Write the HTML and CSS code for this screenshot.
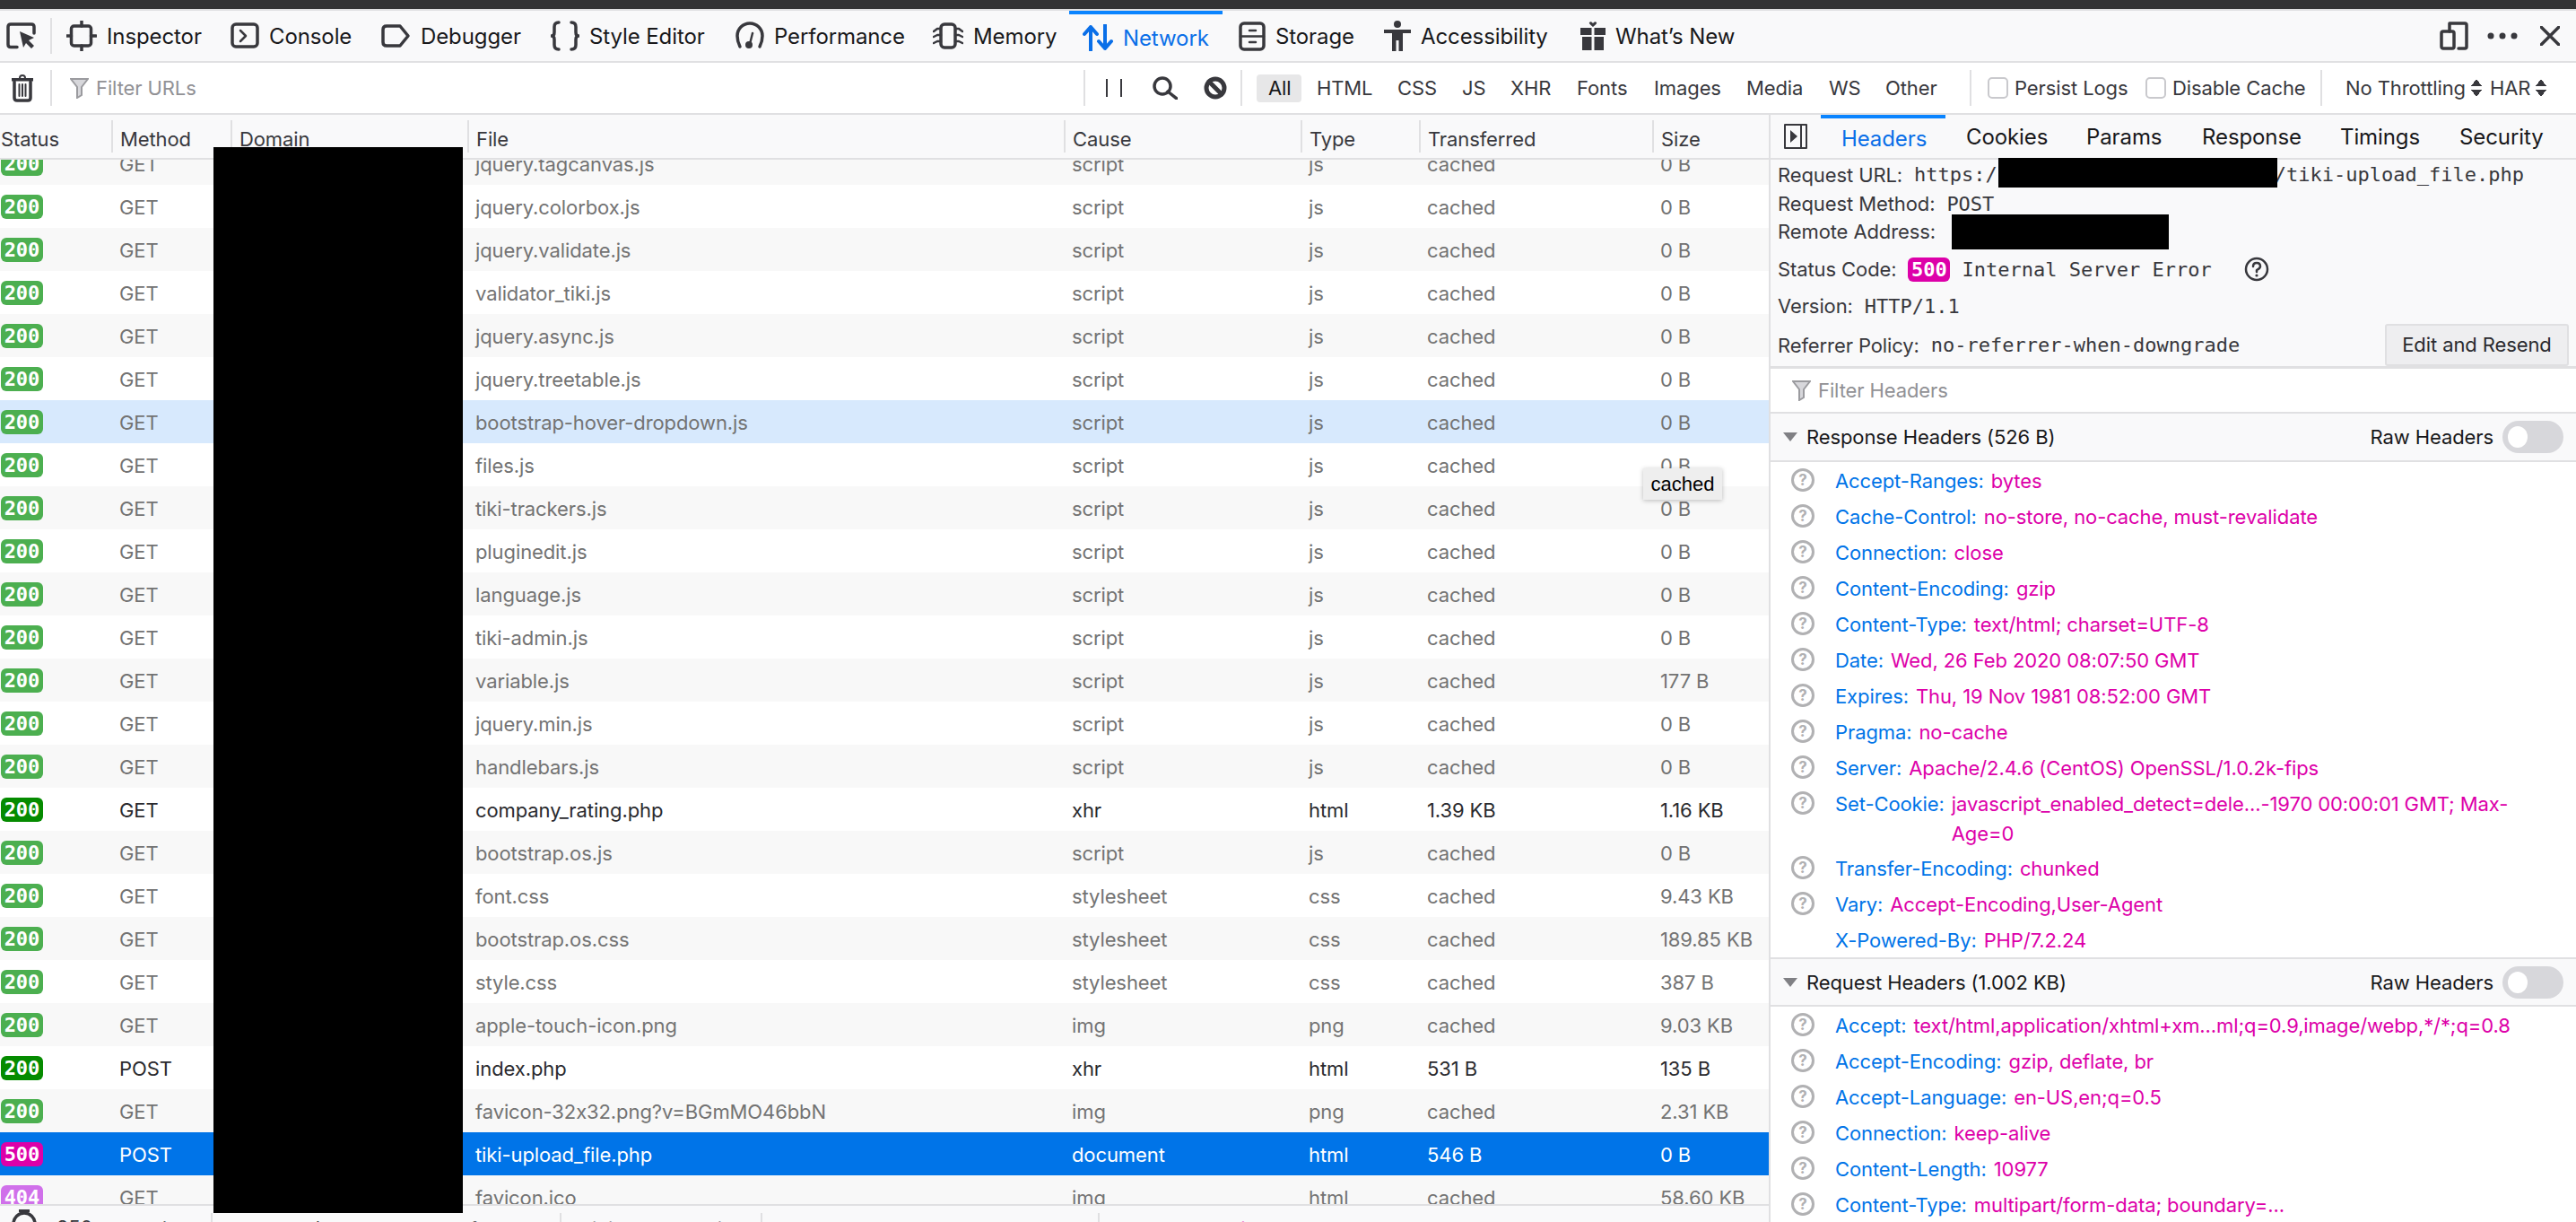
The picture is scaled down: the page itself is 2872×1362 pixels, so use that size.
FILE: index.html
```html
<!DOCTYPE html>
<html lang="en">

<head>
    <meta charset="UTF-8">
    <title>Network - Developer Tools</title>
    <link rel="stylesheet" href="styles.css">
</head>

<body>
    <div class="topline"></div>

    <!-- Tools bar -->
    <nav class="tools">
        <div class="picker">
            <svg width="34" height="30" viewBox="0 0 34 30"><path class="st" d="M12 27.5H5Q2 27.5 2 24.5V5Q2 2 5 2H28Q31 2 31 5V12"/><path class="fl" d="M15 10L31 17L25 20L31 26L28 29L22 23L19 28Z"/></svg>
        </div>
        <div class="tab">
            <svg width="34" height="34" viewBox="0 0 34 34"><rect class="st" x="5.5" y="6" width="22" height="22" rx="3"/><path class="st" d="M17 0V6M17 28V34M0 17H5.500M27.500 17H33"/></svg>
            Inspector
        </div>
        <div class="tab">
            <svg width="32" height="30" viewBox="0 0 32 30"><rect class="st" x="2" y="2" width="28" height="25" rx="4"/><path class="st thin" d="M11 9L17 15L11 21"/></svg>
            Console
        </div>
        <div class="tab">
            <svg width="33" height="28" viewBox="0 0 33 28"><path class="st" d="M6 3H21L30 14L21 25H6Q2 25 2 21V7Q2 3 6 3Z"/></svg>
            Debugger
        </div>
        <div class="tab">
            <svg width="32" height="34" viewBox="0 0 32 34"><path class="st" d="M9 2Q4 2 4 7V13Q4 17 1 17Q4 17 4 21V27Q4 32 9 32M23 2Q28 2 28 7V13Q28 17 31 17Q28 17 28 21V27Q28 32 23 32"/></svg>
            Style Editor
        </div>
        <div class="tab">
            <svg width="32" height="34" viewBox="0 0 32 34"><path class="st" d="M5 29Q2 23 2 17A14 14 0 0 1 30 17Q30 23 27 29"/><circle class="fl" cx="15" cy="27" r="4"/><path class="st thin" d="M16 26L19 14"/></svg>
            Performance
        </div>
        <div class="tab">
            <svg width="34" height="30" viewBox="0 0 34 30"><rect class="st" x="9" y="2" width="16" height="26" rx="4"/><path class="st thin" d="M1 10L5 7H9M1 16L5 14H9M1 23L5 21H9M33 10L29 7H25M33 16L29 14H25M33 23L29 21H25"/></svg>
            Memory
        </div>
        <div class="tab active">
            <svg width="34" height="30" viewBox="0 0 34 30"><path class="st blue" d="M9 29V3M2 11L9 3L16 11M25 1V27M18 19L25 27L32 19"/></svg>
            Network
        </div>
        <div class="tab">
            <svg width="30" height="33" viewBox="0 0 30 33"><rect class="st" x="2" y="2" width="26" height="29" rx="4"/><path class="st thin" d="M2 16.500H28M12 10H19M12 23H19"/></svg>
            Storage
        </div>
        <div class="tab">
            <svg width="30" height="34" viewBox="0 0 30 34"><circle class="fl" cx="15" cy="4" r="4"/><path class="fl" d="M0 10H30V14H21V34H16.500V22H13.500V34H9V14H0Z"/></svg>
            Accessibility
        </div>
        <div class="tab">
            <svg width="28" height="32" viewBox="0 0 28 32"><path class="fl" d="M14 6Q9 2 10 1Q12 -1 14 2Q16 -1 18 1Q19 2 14 6ZM0 7H12.500V15H0ZM15.500 7H28V15H15.500ZM2 17H12.500V32H2ZM15.500 17H26V32H15.500Z"/></svg>
            What&rsquo;s New
        </div>
        <div class="tools-end">
            <svg width="32" height="32" viewBox="0 0 32 32"><path class="st" d="M11 2H28Q30 2 30 4V28Q30 30 28 30H21M11 2V11"/><rect class="st" x="2" y="11" width="14" height="19" rx="2"/></svg>
            <svg class="dots" width="34" height="8" viewBox="0 0 34 8"><circle class="fl" cx="4" cy="4" r="3.500"/><circle class="fl" cx="17" cy="4" r="3.500"/><circle class="fl" cx="30" cy="4" r="3.500"/></svg>
            <svg class="close" width="22" height="22" viewBox="0 0 22 22"><path class="st" d="M1 1L21 21M21 1L1 21"/></svg>
        </div>
    </nav>

    <!-- Filter bar -->
    <div class="filterbar">
        <div class="trash">
            <svg width="24" height="31" viewBox="0 0 24 31"><path class="fl" d="M8 4Q8 0 12 0Q16 0 16 4H24V7.500H0V4ZM10 4H14Q14 2 12 2Q10 2 10 4Z"/><path class="st" d="M3 8V26Q3 29 6 29H18Q21 29 21 26V8"/><path class="st hair" d="M8.500 11V24M12 11V24M15.500 11V24"/></svg>
        </div>
        <div class="search">
            <svg width="21" height="23" viewBox="0 0 21 23"><path class="funnel" d="M1 1H20L13 10V19L8 22V10Z"/></svg>
            Filter URLs
        </div>
        <div class="actions">
            <svg width="18" height="20" viewBox="0 0 18 20"><path class="st hair" d="M1 0V20M17 0V20"/></svg>
            <svg class="find" width="28" height="26" viewBox="0 0 28 26"><circle class="st" cx="11" cy="11" r="9"/><path class="st" d="M17 17L27 25"/></svg>
            <svg width="26" height="26" viewBox="0 0 26 26"><circle class="st thick" cx="13" cy="13" r="10"/><path class="st thick" d="M6 6L20 20"/></svg>
        </div>
        <div class="types">
            <span class="type on">All</span>
            <span class="type">HTML</span>
            <span class="type">CSS</span>
            <span class="type">JS</span>
            <span class="type">XHR</span>
            <span class="type">Fonts</span>
            <span class="type">Images</span>
            <span class="type">Media</span>
            <span class="type">WS</span>
            <span class="type">Other</span>
        </div>
        <div class="options">
            <span class="check persist"></span>
            <span class="opt-persist">Persist Logs</span>
            <span class="check"></span>
            <span>Disable Cache</span>
        </div>
        <div class="selects">
            <span>No Throttling</span><span class="updown"></span>
            <span class="har">HAR</span><span class="updown"></span>
        </div>
    </div>

    <main class="content">
        <!-- Requests table -->
        <section class="requests">
            <div class="head grid">
                <span>Status</span><span>Method</span><span>Domain</span><span>File</span><span>Cause</span><span>Type</span><span>Transferred</span><span>Size</span>
            </div>
            <div class="list">
                <div class="rows">
                    <div class="row grid"><span><b class="badge">200</b></span><span>GET</span><span></span><span>jquery.tagcanvas.js</span><span>script</span><span>js</span><span>cached</span><span>0 B</span></div>
                    <div class="row grid"><span><b class="badge">200</b></span><span>GET</span><span></span><span>jquery.colorbox.js</span><span>script</span><span>js</span><span>cached</span><span>0 B</span></div>
                    <div class="row grid"><span><b class="badge">200</b></span><span>GET</span><span></span><span>jquery.validate.js</span><span>script</span><span>js</span><span>cached</span><span>0 B</span></div>
                    <div class="row grid"><span><b class="badge">200</b></span><span>GET</span><span></span><span>validator_tiki.js</span><span>script</span><span>js</span><span>cached</span><span>0 B</span></div>
                    <div class="row grid"><span><b class="badge">200</b></span><span>GET</span><span></span><span>jquery.async.js</span><span>script</span><span>js</span><span>cached</span><span>0 B</span></div>
                    <div class="row grid"><span><b class="badge">200</b></span><span>GET</span><span></span><span>jquery.treetable.js</span><span>script</span><span>js</span><span>cached</span><span>0 B</span></div>
                    <div class="row grid hover"><span><b class="badge">200</b></span><span>GET</span><span></span><span>bootstrap-hover-dropdown.js</span><span>script</span><span>js</span><span>cached</span><span>0 B</span></div>
                    <div class="row grid"><span><b class="badge">200</b></span><span>GET</span><span></span><span>files.js</span><span>script</span><span>js</span><span>cached</span><span>0 B</span></div>
                    <div class="row grid"><span><b class="badge">200</b></span><span>GET</span><span></span><span>tiki-trackers.js</span><span>script</span><span>js</span><span>cached</span><span>0 B</span></div>
                    <div class="row grid"><span><b class="badge">200</b></span><span>GET</span><span></span><span>pluginedit.js</span><span>script</span><span>js</span><span>cached</span><span>0 B</span></div>
                    <div class="row grid"><span><b class="badge">200</b></span><span>GET</span><span></span><span>language.js</span><span>script</span><span>js</span><span>cached</span><span>0 B</span></div>
                    <div class="row grid"><span><b class="badge">200</b></span><span>GET</span><span></span><span>tiki-admin.js</span><span>script</span><span>js</span><span>cached</span><span>0 B</span></div>
                    <div class="row grid"><span><b class="badge">200</b></span><span>GET</span><span></span><span>variable.js</span><span>script</span><span>js</span><span>cached</span><span>177 B</span></div>
                    <div class="row grid"><span><b class="badge">200</b></span><span>GET</span><span></span><span>jquery.min.js</span><span>script</span><span>js</span><span>cached</span><span>0 B</span></div>
                    <div class="row grid"><span><b class="badge">200</b></span><span>GET</span><span></span><span>handlebars.js</span><span>script</span><span>js</span><span>cached</span><span>0 B</span></div>
                    <div class="row grid live"><span><b class="badge">200</b></span><span>GET</span><span></span><span>company_rating.php</span><span>xhr</span><span>html</span><span>1.39 KB</span><span>1.16 KB</span></div>
                    <div class="row grid"><span><b class="badge">200</b></span><span>GET</span><span></span><span>bootstrap.os.js</span><span>script</span><span>js</span><span>cached</span><span>0 B</span></div>
                    <div class="row grid"><span><b class="badge">200</b></span><span>GET</span><span></span><span>font.css</span><span>stylesheet</span><span>css</span><span>cached</span><span>9.43 KB</span></div>
                    <div class="row grid"><span><b class="badge">200</b></span><span>GET</span><span></span><span>bootstrap.os.css</span><span>stylesheet</span><span>css</span><span>cached</span><span>189.85 KB</span></div>
                    <div class="row grid"><span><b class="badge">200</b></span><span>GET</span><span></span><span>style.css</span><span>stylesheet</span><span>css</span><span>cached</span><span>387 B</span></div>
                    <div class="row grid"><span><b class="badge">200</b></span><span>GET</span><span></span><span>apple-touch-icon.png</span><span>img</span><span>png</span><span>cached</span><span>9.03 KB</span></div>
                    <div class="row grid live"><span><b class="badge">200</b></span><span>POST</span><span></span><span>index.php</span><span>xhr</span><span>html</span><span>531 B</span><span>135 B</span></div>
                    <div class="row grid"><span><b class="badge">200</b></span><span>GET</span><span></span><span>favicon-32x32.png?v=BGmMO46bbN</span><span>img</span><span>png</span><span>cached</span><span>2.31 KB</span></div>
                    <div class="row grid selected"><span><b class="badge err">500</b></span><span>POST</span><span></span><span>tiki-upload_file.php</span><span>document</span><span>html</span><span>546 B</span><span>0 B</span></div>
                    <div class="row grid"><span><b class="badge miss">404</b></span><span>GET</span><span></span><span>favicon.ico</span><span>img</span><span>html</span><span>cached</span><span>58.60 KB</span></div>
                </div>
            </div>
            <footer class="summary">
                <div class="sum-count">
                    <svg width="28" height="30" viewBox="0 0 28 30"><path class="fl" d="M8 0H20V3H8Z"/><circle class="st" cx="14" cy="16" r="12"/></svg>
                    250 requests
                </div>
                <div class="sum-size">7.40 MB / 257.35 KB transferred</div>
                <div class="sum-finish">Finish: 10.35 min</div>
                <div class="sum-dom">DOMContentLoaded: 10.35 s</div>
                <div class="sum-load">load: 10.35 min</div>
            </footer>
        </section>

        <!-- Details panel -->
        <aside class="panel">
            <div class="panel-tabs">
                <svg class="toggle" width="26" height="28" viewBox="0 0 26 28"><rect x="1" y="1" width="24" height="26" class="st hair"/><path class="st hair" d="M19 1V27"/><path class="fl" d="M7 7L15 14L7 21Z"/></svg>
                <span class="ptab on">Headers</span>
                <span class="ptab">Cookies</span>
                <span class="ptab">Params</span>
                <span class="ptab">Response</span>
                <span class="ptab">Timings</span>
                <span class="ptab">Security</span>
            </div>

            <div class="summary-box">
                <div class="line l-url">Request URL: <code class="url">https:/</code><code class="url-end">/tiki-upload_file.php</code></div>
                <div class="line l-method">Request Method: <code>POST</code></div>
                <div class="line l-addr">Remote Address:</div>
                <div class="line l-status">Status Code: <b class="badge err">500</b> <code>Internal Server Error</code>
                    <svg class="qmark" width="28" height="28" viewBox="0 0 28 28"><circle class="st thin" cx="14" cy="14" r="12"/><path class="st thin" d="M10 11Q10 7 14 7Q18 7 18 11Q18 13 14 15V17"/><circle class="fl" cx="14" cy="21" r="1.600"/></svg>
                </div>
                <div class="line l-version">Version: <code>HTTP/1.1</code></div>
                <div class="line l-policy">Referrer Policy: <code>no-referrer-when-downgrade</code>
                    <span class="resend">Edit and Resend</span>
                </div>
            </div>

            <div class="header-filter">
                <svg width="21" height="23" viewBox="0 0 21 23"><path class="funnel" d="M1 1H20L13 10V19L8 22V10Z"/></svg>
                Filter Headers
            </div>

            <div class="section">
                <i class="tri"></i>
                <span>Response Headers (526 B)</span>
                <span class="raw">Raw Headers</span>
                <i class="switch"></i>
            </div>
            <ul class="headers">
                <li><i class="q">?</i><span class="k">Accept-Ranges:</span><span class="v">bytes</span></li>
                <li><i class="q">?</i><span class="k">Cache-Control:</span><span class="v">no-store, no-cache, must-revalidate</span></li>
                <li><i class="q">?</i><span class="k">Connection:</span><span class="v">close</span></li>
                <li><i class="q">?</i><span class="k">Content-Encoding:</span><span class="v">gzip</span></li>
                <li><i class="q">?</i><span class="k">Content-Type:</span><span class="v">text/html; charset=UTF-8</span></li>
                <li><i class="q">?</i><span class="k">Date:</span><span class="v">Wed, 26 Feb 2020 08:07:50 GMT</span></li>
                <li><i class="q">?</i><span class="k">Expires:</span><span class="v">Thu, 19 Nov 1981 08:52:00 GMT</span></li>
                <li><i class="q">?</i><span class="k">Pragma:</span><span class="v">no-cache</span></li>
                <li><i class="q">?</i><span class="k">Server:</span><span class="v">Apache/2.4.6 (CentOS) OpenSSL/1.0.2k-fips</span></li>
                <li class="wrap"><i class="q">?</i><span class="k">Set-Cookie:</span><span class="v">javascript_enabled_detect=dele...-1970 00:00:01 GMT; Max-Age=0</span></li>
                <li><i class="q">?</i><span class="k">Transfer-Encoding:</span><span class="v">chunked</span></li>
                <li><i class="q">?</i><span class="k">Vary:</span><span class="v">Accept-Encoding,User-Agent</span></li>
                <li><i class="q none"></i><span class="k">X-Powered-By:</span><span class="v">PHP/7.2.24</span></li>
            </ul>

            <div class="section">
                <i class="tri"></i>
                <span>Request Headers (1.002 KB)</span>
                <span class="raw">Raw Headers</span>
                <i class="switch"></i>
            </div>
            <ul class="headers">
                <li><i class="q">?</i><span class="k">Accept:</span><span class="v">text/html,application/xhtml+xm...ml;q=0.9,image/webp,*/*;q=0.8</span></li>
                <li><i class="q">?</i><span class="k">Accept-Encoding:</span><span class="v">gzip, deflate, br</span></li>
                <li><i class="q">?</i><span class="k">Accept-Language:</span><span class="v">en-US,en;q=0.5</span></li>
                <li><i class="q">?</i><span class="k">Connection:</span><span class="v">keep-alive</span></li>
                <li><i class="q">?</i><span class="k">Content-Length:</span><span class="v">10977</span></li>
                <li><i class="q">?</i><span class="k">Content-Type:</span><span class="v">multipart/form-data; boundary=...</span></li>
            </ul>
        </aside>
    </main>

    <!-- Blacked out parts of the screenshot -->
    <div class="redact r-domain"></div>
    <div class="redact r-url"></div>
    <div class="redact r-addr"></div>

    <div class="tip">cached</div>
</body>

</html>
```

FILE: styles.css
```css
/* General Reset */
* {
    margin: 0;
    padding: 0;
    box-sizing: border-box;
}

html,
body {
    width: 2872px;
    height: 1362px;
    overflow: hidden;
}

body {
    position: relative;
    background-color: #f9f9fa;
    color: #18181a;
    font-family: 'Inter', 'Liberation Sans', sans-serif;
    font-size: 22px;
    letter-spacing: -0.1px;
}

code,
.badge {
    font-family: 'DejaVu Sans Mono', monospace;
    font-size: 22px;
    letter-spacing: 0;
}

svg {
    flex: none;
}

/* Shared SVG paint */
.st {
    fill: none;
    stroke: #38383d;
    stroke-width: 3.5;
    stroke-linecap: round;
    stroke-linejoin: round;
}

.st.thin {
    stroke-width: 2.5;
}

.st.hair {
    stroke-width: 2;
}

.st.thick {
    stroke-width: 5;
}

.st.blue {
    stroke: #0a6fe8;
    stroke-width: 4;
}

.fl {
    fill: #38383d;
}

.funnel {
    fill: #d7d7db;
    stroke: #9b9b9f;
    stroke-width: 2;
}

.topline {
    height: 12px;
    background-color: #333335;
    border-bottom: 2px solid #e0e0e2;
}

/* Tools bar */
.tools {
    display: flex;
    height: 58px;
    align-items: stretch;
    background-color: #f9f9fa;
    border-bottom: 2px solid #e0e0e2;
    font-size: 24px;
}

.picker {
    display: flex;
    width: 58px;
    padding-left: 7px;
    align-items: center;
    position: relative;
}

.picker::after,
.trash::after {
    content: "";
    position: absolute;
    right: 0;
    top: 8px;
    bottom: 8px;
    width: 2px;
    background-color: #e0e0e2;
}

.tab {
    display: flex;
    align-items: center;
    gap: 11px;
    padding-left: 16px;
    white-space: nowrap;
}

.tab:nth-child(2) { width: 183px; }
.tab:nth-child(3) { width: 168px; }
.tab:nth-child(4) { width: 189px; }
.tab:nth-child(5) { width: 206px; }
.tab:nth-child(6) { width: 220px; }
.tab:nth-child(7) { width: 168px; }
.tab:nth-child(9) { width: 164px; padding-left: 18px; }
.tab:nth-child(10) { width: 218px; }
.tab:nth-child(11) { width: 270px; padding-left: 17px; }

.tab.active {
    width: 171px;
    padding-left: 15px;
    color: #0a6fe8;
    border-top: 4px solid #0a84ff;
}

.tools-end {
    display: flex;
    align-items: center;
    margin-left: auto;
    padding-right: 18px;
}

.tools-end .dots {
    margin-left: 21px;
}

.tools-end .close {
    margin-left: 25px;
}

/* Filter bar */
.filterbar {
    display: flex;
    height: 58px;
    align-items: center;
    background-color: #fff;
    border-bottom: 2px solid #e0e0e2;
}

.trash {
    position: relative;
    display: flex;
    width: 58px;
    height: 56px;
    padding-left: 13px;
    align-items: center;
}

.search {
    display: flex;
    align-items: center;
    gap: 8px;
    width: 1150px;
    height: 56px;
    padding-left: 20px;
    color: #919195;
}

.actions {
    display: flex;
    align-items: center;
    gap: 29px;
    width: 177px;
    height: 40px;
    padding-left: 23px;
    border-left: 2px solid #e0e0e2;
    border-right: 2px solid #e0e0e2;
}

.actions .find {
    margin-left: 5px;
}

.types {
    display: grid;
    grid-template-columns: 54px 90px 72px 54px 74px 86px 103px 92px 63px 91px;
    width: 811px;
    padding-left: 16px;
    color: #38383d;
}

.type {
    height: 31px;
    line-height: 31px;
    padding-left: 13px;
}

.type.on {
    width: 50px;
    border-radius: 4px;
    background-color: #e7e7e8;
    color: #18181a;
}

.options {
    display: flex;
    align-items: center;
    width: 393px;
    height: 40px;
    padding-left: 18px;
    color: #38383d;
    border-left: 2px solid #e0e0e2;
    border-right: 2px solid #e0e0e2;
}

.check {
    width: 23px;
    height: 24px;
    margin-right: 7px;
    background-color: #fff;
    border: 2px solid #c9c9cd;
    border-radius: 5px;
}

.opt-persist {
    width: 146px;
}

.selects {
    display: flex;
    align-items: center;
    padding-left: 26px;
    color: #38383d;
}

.updown {
    margin-left: 6px;
    width: 12px;
    height: 24px;
    background:
        linear-gradient(to bottom right, transparent 50%, #38383d 50%) left 2px / 6px 8px no-repeat,
        linear-gradient(to bottom left, transparent 50%, #38383d 50%) right 2px / 6px 8px no-repeat,
        linear-gradient(to top right, transparent 50%, #38383d 50%) left 14px / 6px 8px no-repeat,
        linear-gradient(to top left, transparent 50%, #38383d 50%) right 14px / 6px 8px no-repeat;
}

.har {
    margin-left: 9px;
}

/* Main split */
.content {
    display: flex;
    height: 1234px;
}

.requests {
    display: flex;
    flex-direction: column;
    width: 1972px;
    background-color: #fff;
}

.grid {
    display: grid;
    grid-template-columns: 124px 133px 264px 665px 264px 132px 260px 130px;
}

/* Requests table */
.head {
    flex: none;
    height: 50px;
    padding-top: 6px;
    background-color: #f9f9fa;
    border-bottom: 2px solid #e0e0e2;
    color: #38383d;
}

.head span {
    height: 36px;
    padding-top: 8px;
    padding-left: 8px;
    border-left: 2px solid #e0e0e2;
    white-space: nowrap;
}

.head span:first-child {
    padding-left: 1px;
    border-left: none;
}

.list {
    flex: 1;
    overflow: hidden;
}

.rows {
    margin-top: -20px;
}

.row {
    height: 48px;
    line-height: 50px;
    color: #737373;
    background-color: #fff;
    white-space: nowrap;
}

.row:nth-child(odd) {
    background-color: #f8f8f8;
}

.row span {
    padding-left: 9px;
}

.row span:first-child {
    display: flex;
    height: 48px;
    align-items: center;
    padding-left: 1px;
}

.row.hover {
    background-color: #d7e9fd;
}

.row.live {
    color: #2a2a2e;
}

.row.selected {
    background-color: #0074e8;
    color: #fff;
}

.badge {
    display: inline-block;
    width: 47px;
    height: 27px;
    line-height: 27px;
    border-radius: 6px;
    background-color: #4caf50;
    color: #fff;
    text-align: center;
    font-weight: bold;
}

.row.live .badge {
    background-color: #058b00;
}

.badge.err,
.row.live .badge.err {
    background-color: #dd00a9;
}

.badge.miss {
    background-color: #d070ea;
}

/* Status bar, cut off by the bottom of the window */
.summary {
    display: flex;
    flex: none;
    height: 20px;
    overflow: hidden;
    background-color: #f9f9fa;
    border-top: 2px solid #e0e0e2;
    white-space: nowrap;
    color: #38383d;
}

.summary div {
    height: 100%;
    margin-top: 8px;
    padding-top: 5px;
    padding-left: 21px;
    border-left: 2px solid #e0e0e2;
}

.summary .sum-count {
    display: flex;
    gap: 22px;
    width: 235px;
    margin-top: 4px;
    padding-top: 0;
    padding-left: 13px;
    border-left: none;
    line-height: 41px;
}

.summary .sum-size { width: 389px; }
.summary .sum-finish { width: 224px; }
.summary .sum-dom { width: 376px; color: #0074e8; }
.summary .sum-load { color: #dd00a9; }

/* Details panel */
.panel {
    flex: 1;
    overflow: hidden;
    background-color: #fff;
    border-left: 2px solid #e0e0e2;
}

.panel-tabs {
    display: flex;
    height: 50px;
    align-items: center;
    background-color: #f9f9fa;
    border-bottom: 2px solid #e0e0e2;
    font-size: 24px;
}

.toggle {
    margin-left: 15px;
    margin-right: 15px;
}

.ptab {
    display: flex;
    height: 48px;
    align-items: center;
    padding-left: 23px;
    color: #18181a;
}

.ptab:nth-of-type(1) { width: 139px; }
.ptab:nth-of-type(2) { width: 134px; }
.ptab:nth-of-type(3) { width: 129px; }
.ptab:nth-of-type(4) { width: 154px; }
.ptab:nth-of-type(5) { width: 133px; }

.ptab.on {
    color: #0a6fe8;
    border-top: 4px solid #0a84ff;
}

.summary-box {
    height: 233px;
    padding-left: 8px;
    background-color: #f9f9fa;
    border-bottom: 3px solid #e0e0e2;
    color: #38383d;
}

.line {
    display: flex;
    align-items: center;
    gap: 13px;
    white-space: nowrap;
}

.l-url { height: 33px; }
.l-method { height: 32px; }
.l-addr { height: 30px; }
.l-status { height: 46px; padding-top: 8px; }
.l-version { height: 42px; padding-top: 2px; }

.l-policy {
    height: 47px;
    padding-right: 8px;
}

.url {
    margin-right: -13px;
}

.url-end {
    margin-left: 309px;
}

.qmark {
    margin-left: 23px;
}

.resend {
    width: 205px;
    height: 47px;
    margin-left: auto;
    line-height: 43px;
    text-align: center;
    background-color: #eeeef0;
    border: 2px solid #e0e0e2;
    border-radius: 3px;
    color: #2a2a2e;
}

.header-filter {
    display: flex;
    align-items: center;
    gap: 8px;
    height: 50px;
    padding-left: 24px;
    color: #919195;
    border-bottom: 2px solid #e0e0e2;
}

.section {
    display: flex;
    align-items: center;
    height: 54px;
    padding-left: 14px;
    background-color: #f9f9fa;
    border-bottom: 2px solid #e0e0e2;
}

.headers + .section {
    height: 53px;
}

.tri {
    width: 0;
    height: 0;
    margin-right: 10px;
    border-left: 8px solid transparent;
    border-right: 8px solid transparent;
    border-top: 10px solid #808084;
}

.raw {
    margin-left: auto;
    margin-right: 10px;
}

.switch {
    position: relative;
    width: 68px;
    height: 36px;
    margin-right: 14px;
    border-radius: 18px;
    background-color: #d7d7db;
}

.switch::after {
    content: "";
    position: absolute;
    left: 6px;
    top: 6px;
    width: 22px;
    height: 24px;
    border-radius: 50%;
    background-color: #fff;
}

.headers {
    list-style: none;
    border-bottom: 2px solid #e0e0e2;
}

.headers li {
    display: flex;
    gap: 8px;
    height: 40px;
    padding-left: 23px;
    line-height: 42px;
    white-space: nowrap;
}

.headers li.wrap {
    height: 72px;
    line-height: 33px;
    padding-top: 5px;
}

.headers li.wrap .v {
    flex: none;
    width: 650px;
    white-space: normal;
}

.q {
    flex: none;
    width: 26px;
    height: 26px;
    margin: 7px 15px 0 0;
    border: 3px solid #b1b1b3;
    border-radius: 50%;
    color: #b1b1b3;
    font-style: normal;
    font-size: 17px;
    font-weight: bold;
    line-height: 20px;
    text-align: center;
}

.q.none {
    visibility: hidden;
}

.wrap .q {
    margin-top: 2px;
}

.k {
    color: #0074e8;
}

.v {
    color: #dd00a9;
}

/* Redaction blocks and tooltip sit over everything */
.redact {
    position: absolute;
    background-color: #000;
}

.r-domain {
    left: 238px;
    top: 164px;
    width: 278px;
    height: 1188px;
}

.r-url {
    left: 2228px;
    top: 176px;
    width: 311px;
    height: 33px;
}

.r-addr {
    left: 2176px;
    top: 239px;
    width: 242px;
    height: 39px;
}

.tip {
    position: absolute;
    left: 1832px;
    top: 522px;
    width: 88px;
    height: 35px;
    line-height: 35px;
    text-align: center;
    background-color: #eeeeee;
    color: #000;
    font-family: 'Liberation Sans', sans-serif;
    font-size: 22px;
    letter-spacing: 0;
    box-shadow: 0 1px 5px rgba(0, 0, 0, 0.25);
}
```
